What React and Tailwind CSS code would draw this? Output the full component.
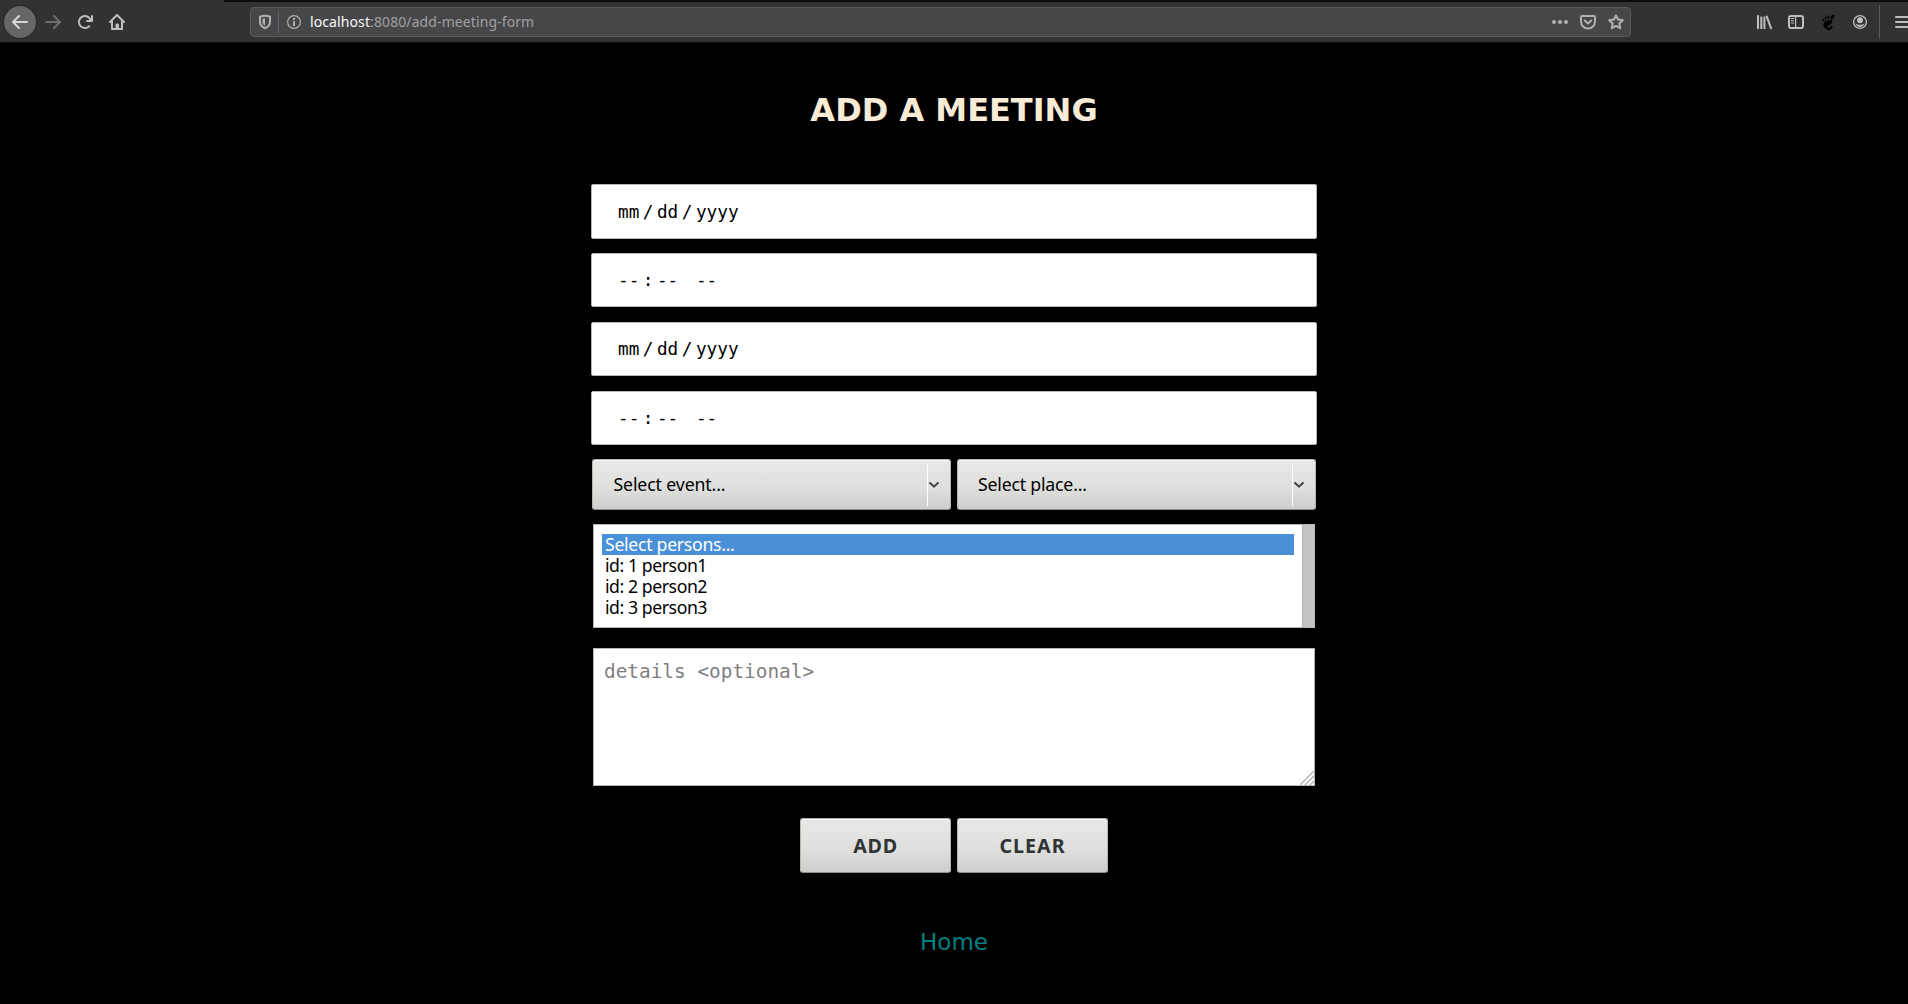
import React from "react";
import { SiGnome } from "react-icons/si";

const UI = "font-['Noto_Sans',sans-serif]";

function Icon({ className = "", children, box = "0 0 16 16" }) {
  return (
    <svg viewBox={box} fill="currentColor" className={`block h-4 w-4 shrink-0 ${className}`}>
      {children}
    </svg>
  );
}

function Toolbar() {
  return (
    <header className="flex h-[43px] w-full items-center overflow-hidden border-b border-[#0c0c0d] bg-[#323234] pt-[2px] text-[#bfbfc0]">
      <div className="ml-1 flex h-8 w-8 shrink-0 items-center justify-center rounded-full bg-[#666667] text-[#d6d6d6] shadow-[0_0_0_1px_#29292b]">
        <Icon>
          <path d="M15 7H3.414l4.293-4.293a1 1 0 0 0-1.414-1.414l-6 6a1 1 0 0 0 0 1.414l6 6a1 1 0 0 0 1.414-1.414L3.414 9H15a1 1 0 0 0 0-2z" />
        </Icon>
      </div>
      <Icon className="ml-[9px] text-[#6f6f70]">
        <path d="M15.707 7.293l-6-6a1 1 0 0 0-1.414 1.414L12.586 7H1a1 1 0 0 0 0 2h11.586l-4.293 4.293a1 1 0 1 0 1.414 1.414l6-6a1 1 0 0 0 0-1.414z" />
      </Icon>
      <Icon className="ml-4">
        <path d="M15 1a1 1 0 0 0-1 1v2.418A6.995 6.995 0 1 0 8 15a6.954 6.954 0 0 0 4.950-2.050 1 1 0 0 0-1.414-1.414A5.019 5.019 0 1 1 12.549 6H10a1 1 0 0 0 0 2h5a1 1 0 0 0 1-1V2a1 1 0 0 0-1-1z" />
      </Icon>
      <Icon className="ml-4">
        <g fill="none" stroke="currentColor" strokeWidth="2" strokeLinecap="round" strokeLinejoin="round">
          <path d="M1 8L8 1l7 7" />
          <path d="M3 7.500V15h10V7.500" />
        </g>
        <path d="M6.500 15V10.500a1 1 0 0 1 1-1h1.500a1 1 0 0 1 1 1V15z" />
      </Icon>
      <div className={`ml-[125px] flex h-[30px] w-[1381px] shrink-0 items-center rounded-[4px] border border-[#5b5b5d] bg-[#474749] text-[#b1b1b3] ${UI}`}>
        <Icon className="ml-[6px]">
          <path d="M8 1.800c1.700 0 3.400.3 5 .8v5.200c0 3-2 5.200-5 6.400-3-1.200-5-3.400-5-6.400V2.600c1.600-.5 3.300-.8 5-.8z" fill="none" stroke="currentColor" strokeWidth="2" />
          <path d="M8 4.500v7.200c-1.700-1-2.500-2.300-2.500-4V4.800c.8-.2 1.600-.3 2.500-.3z" />
        </Icon>
        <div className="ml-[5px] h-[22px] w-px bg-[#67676b]" />
        <Icon className="ml-[7px]">
          <circle cx="8" cy="8" r="6.400" fill="none" stroke="currentColor" strokeWidth="1.200" />
          <rect x="7" y="7" width="2" height="5" rx=".6" />
          <circle cx="8" cy="5" r="1.150" />
        </Icon>
        <p className="ml-2 whitespace-pre text-[14px] leading-5 tracking-[0.1px] text-[#a0a0a2]">
          <span className="text-[#f9f9fa]">localhost</span>:8080/add-meeting-form
        </p>
        <Icon className="ml-auto">
          <circle cx="2" cy="8" r="2" />
          <circle cx="8" cy="8" r="2" />
          <circle cx="14" cy="8" r="2" />
        </Icon>
        <Icon className="ml-3">
          <path d="M2 2h12a1 1 0 0 1 1 1v4.500a7 7 0 0 1-14 0V3a1 1 0 0 1 1-1z" fill="none" stroke="currentColor" strokeWidth="2" />
          <path d="M4.800 6.500L8 9.600l3.200-3.100" fill="none" stroke="currentColor" strokeWidth="2" strokeLinecap="round" strokeLinejoin="round" />
        </Icon>
        <Icon className="ml-3 mr-[6px]">
          <path d="M8 1.300l2.050 4.300 4.750.6-3.500 3.250.9 4.750L8 11.900l-4.200 2.300.9-4.750L1.200 6.200l4.750-.6z" fill="none" stroke="currentColor" strokeWidth="2" strokeLinejoin="round" />
        </Icon>
      </div>
      <Icon className="ml-[125px]">
        <rect x="1" y="1" width="2" height="14" rx=".6" />
        <rect x="4.300" y="2.500" width="2" height="12.500" rx=".6" />
        <rect x="7.400" y="2.500" width="2" height="12.500" rx=".6" />
        <path d="M10.800 2.600L15 14.200" stroke="currentColor" strokeWidth="2" strokeLinecap="round" />
      </Icon>
      <Icon className="ml-4">
        <rect x="1" y="2" width="14" height="12" rx="2" fill="none" stroke="currentColor" strokeWidth="2" />
        <path d="M7 2h1.200v12H7zM3 4h3v1.100H3zM3 6.200h3v1.100H3zM3 8.400h3v1.100H3z" />
      </Icon>
      <SiGnome className="ml-[17px] h-[15px] w-[15px] shrink-0 text-black" />
      <Icon className="ml-4">
        <circle cx="8" cy="8" r="6.400" fill="none" stroke="currentColor" strokeWidth="1.300" />
        <circle cx="8" cy="6.200" r="3" />
        <path d="M3.600 9.600c1 .9 2.600 1.200 4.400 1.200s3.400-.3 4.400-1.200c-.6 2.200-2.200 3.500-4.400 3.500s-3.800-1.300-4.400-3.500z" />
      </Icon>
      <div className="ml-[11px] h-[34px] w-px shrink-0 bg-[#5b5b5d]" />
      <Icon className="ml-[14px]">
        <rect x="1" y="2" width="14" height="2" rx="1" />
        <rect x="1" y="7" width="14" height="2" rx="1" />
        <rect x="1" y="12" width="14" height="2" rx="1" />
      </Icon>
    </header>
  );
}

function SegmentField({ parts, className }) {
  return (
    <div className={`flex w-[726px] items-center rounded-[2px] border border-[#b6b6b3] bg-white pl-[26px] font-['DejaVu_Sans_Mono',monospace] text-[17.7px] leading-5 text-black ${className}`}>
      <p className="whitespace-pre">
        {parts.map((part, i) => (
          <span key={i} className={i % 2 ? "px-[3.5px]" : ""}>{part}</span>
        ))}
      </p>
    </div>
  );
}

const DATE = ["mm", "/", "dd", "/", "yyyy"];
const TIME = ["--", ":", "--", " ", "--"];
const FACE =
  "rounded-[3px] border border-[#b4b4b1] border-b-[#8f8f8c] bg-linear-to-b from-[#e8e8e6] via-[#dededc] via-60% to-[#cdcdcb] shadow-[inset_0_1px_0_#fbfbfb]";

function Dropdown({ label, spacing }) {
  return (
    <div className={`flex h-[51px] w-[359px] items-center text-[17.7px] text-black ${FACE} ${UI}`}>
      <span className={`whitespace-pre pb-[2px] leading-6 ${spacing}`}>{label}</span>
      <div className="ml-auto h-[42px] w-px bg-white" />
      <svg viewBox="0 0 12 8" className="mr-[10px] h-2 w-3">
        <path d="M2 2.700l4 4 4-4" fill="none" stroke="#fff" strokeWidth="1.600" />
        <path d="M1.500 1.500L6 5.700l4.500-4.200" fill="none" stroke="#3b4043" strokeWidth="2" />
      </svg>
    </div>
  );
}

function PushButton({ label, spacing }) {
  return (
    <button className={`h-[55px] w-[151px] text-[19.7px] font-bold text-[#2e3436] ${spacing} ${FACE} ${UI}`}>{label}</button>
  );
}

export default function App() {
  const people = ["Select persons...", "id: 1 person1", "id: 2 person2", "id: 3 person3"];
  return (
    <div className="flex h-[1004px] w-[1908px] flex-col overflow-hidden bg-black">
      <div className="relative">
        <Toolbar />
        <div className="absolute left-[224px] right-0 top-0 h-[2px] bg-[#0c0c0d]" />
      </div>
      <main className="flex flex-col items-center">
        <h1 className="mt-[47px] font-['DejaVu_Sans',sans-serif] text-[32px] font-bold leading-10 text-[#faebd7]">ADD A MEETING</h1>
        <SegmentField parts={DATE} className="mt-[54px] h-[55px]" />
        <SegmentField parts={TIME} className="mt-[14px] h-[54px]" />
        <SegmentField parts={DATE} className="mt-[15px] h-[54px]" />
        <SegmentField parts={TIME} className="mt-[15px] h-[54px]" />
        <div className="mt-[14px] flex gap-[6px]">
          <Dropdown label="Select event..." spacing="pl-[20.5px] tracking-[-0.13px]" />
          <Dropdown label="Select place..." spacing="pl-5 tracking-[-0.2px]" />
        </div>
        <div className="mt-[14px] flex h-[104px] w-[722px] border border-[#b6b6b3] bg-white">
          <ul className={`flex-1 px-2 pt-[9px] text-[17.7px] leading-[21px] text-black ${UI}`}>
            {people.map((name, i) => (
              <li key={name} className={`h-[21px] whitespace-pre pl-[3px] ${i === 0 ? "bg-[#4a90d9] tracking-[-0.3px] text-white" : "tracking-[-0.45px]"}`}>{name}</li>
            ))}
          </ul>
          <div className="w-3 border-l border-[#b0b2b1] bg-[#c3c5c4]" />
        </div>
        <div className="relative mt-5 h-[138px] w-[722px] border border-[#b6b6b3] bg-white pl-[10px] pt-[11px] font-['DejaVu_Sans_Mono',monospace] text-[19.4px] leading-6 text-[#7f7f7f]">
          <p>details &lt;optional&gt;</p>
          <svg viewBox="0 0 14 14" className="absolute bottom-0 right-0 h-[14px] w-[14px]" stroke="#b3b5b4" strokeWidth="1.500">
            <path d="M0 14L14 0M5 14L14 5M10 14l4-4" />
          </svg>
        </div>
        <div className="mt-8 flex gap-[6px]">
          <PushButton label="ADD" spacing="tracking-[0.7px]" />
          <PushButton label="CLEAR" spacing="tracking-[1px]" />
        </div>
        <a className="mt-[55px] font-['DejaVu_Sans',sans-serif] text-[23px] leading-7 text-[#008080]">Home</a>
      </main>
    </div>
  );
}
